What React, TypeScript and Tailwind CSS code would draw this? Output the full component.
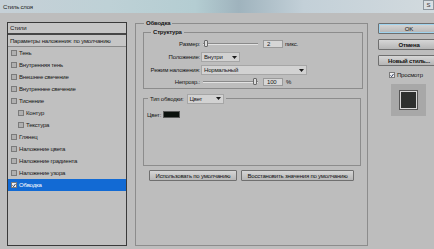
import React from "react";

type StyleItem = {
  label: string;
  indent?: boolean;
  checked?: boolean;
  active?: boolean;
};

const styleItems: StyleItem[] = [
  { label: "Тень" },
  { label: "Внутренняя тень" },
  { label: "Внешнее свечение" },
  { label: "Внутреннее свечение" },
  { label: "Тиснение" },
  { label: "Контур", indent: true },
  { label: "Текстура", indent: true },
  { label: "Глянец" },
  { label: "Наложение цвета" },
  { label: "Наложение градиента" },
  { label: "Наложение узора" },
  { label: "Обводка", checked: true, active: true },
];

const font = "font-['Liberation_Sans',Arial,sans-serif]";

function CheckBox({ checked, light }: { checked?: boolean; light?: boolean }) {
  return (
    <span
      className={`w-[6px] h-[6px] shrink-0 border border-[#7a7a7a] flex items-center justify-center ${
        light || checked ? "bg-[#f0f0f0]" : "bg-[#b0b0b0]"
      }`}
    >
      {checked && (
        <svg width="5" height="5" viewBox="0 0 5 5">
          <path d="M0.6 2.4 L2 3.9 L4.4 0.6" stroke="#1b2a55" strokeWidth="1.1" fill="none" />
        </svg>
      )}
    </span>
  );
}

function Dropdown({ value, width }: { value: string; width: string }) {
  return (
    <div
      className={`${width} h-[10px] bg-[#d2d2d2] border border-[#a6a6a6] flex items-center justify-between pl-[2px] pr-[2px]`}
    >
      <span className="leading-none">{value}</span>
      <svg width="5" height="3" viewBox="0 0 5 3">
        <path d="M0 0 H5 L2.5 3 Z" fill="#1a1a1a" />
      </svg>
    </div>
  );
}

function Slider({ end }: { end?: boolean }) {
  return (
    <div className="relative w-[55px] h-[9px]">
      <div className="absolute inset-x-0 top-[4px] h-[2px] border-t border-[#8a8a8a] border-b border-b-[#e2e2e2]" />
      <div
        className={`absolute top-[1px] w-[4px] h-[7px] rounded-[1px] bg-[#dcdcdc] border border-[#6a6a6a] ${
          end ? "right-[1px]" : "left-[1px]"
        }`}
      />
    </div>
  );
}

function NumBox({ value }: { value: string }) {
  return (
    <div className="w-[20px] h-[8px] bg-[#d6d6d6] border border-[#9a9a9a] flex items-center pl-[3px] leading-none">
      {value}
    </div>
  );
}

function Btn({ children, className }: { children: React.ReactNode; className: string }) {
  return (
    <div
      className={`h-[11px] flex items-center justify-center bg-[linear-gradient(#d6d6d6,#b6b6b6)] border border-[#6f6f6f] rounded-[1px] leading-none text-[#111] ${className}`}
    >
      {children}
    </div>
  );
}

export default function App() {
  return (
    <div
      className={`w-[434px] h-[249px] overflow-hidden flex flex-col bg-[#bdbdbd] text-[6px] tracking-[-0.2px] whitespace-nowrap text-[#161616] ${font}`}
    >
      {/* title bar */}
      <div className="h-[13px] shrink-0 flex items-center justify-between pl-[3px] bg-[linear-gradient(90deg,#c6d0d7_0%,#bed1d6_25%,#b4cdd2_45%,#9fb3bd_55%,#c3d0d8_70%,#d2dade_100%)]">
        <span className="leading-none text-[#202020]">Стиль слоя</span>
        <div className="self-start w-[11px] h-[10px] bg-[#d9dfe3] border border-[#8d979e] flex items-center justify-center text-[#333]">
          S
        </div>
      </div>

      <div className="flex items-start flex-1">
        {/* left list */}
        <div className="ml-[7px] mt-[9px] w-[120px] h-[224px] shrink-0 border border-[#3a3a3a] bg-[#c0c0c0] flex flex-col">
          <div className="h-[10px] flex items-center pl-[2px] bg-[#c6c6c6] leading-none">Стили</div>
          <div className="h-[2px] bg-[#474747]" />
          <div className="h-[11px] flex items-center pl-[2px] bg-[#c6c6c6] leading-none">
            Параметры наложения: по умолчанию
          </div>
          <div className="h-[1px] bg-[#8a8a8a]" />
          {styleItems.map((item) => (
            <div
              key={item.label}
              className={`h-[12px] flex items-center gap-[2px] leading-none ${
                item.indent ? "pl-[10px]" : "pl-[3px]"
              } ${item.active ? "bg-[#126ad4] text-white" : ""}`}
            >
              <CheckBox checked={item.checked} />
              <span>{item.label}</span>
            </div>
          ))}
        </div>

        {/* middle group */}
        <div className="ml-[8px] mt-[10px] w-[233px] h-[223px] shrink-0 border border-[#8c8c8c] flex flex-col">
          <span className="-mt-[5px] ml-[8px] self-start px-[2px] h-[9px] leading-[9px] bg-[#bdbdbd] font-bold">
            Обводка
          </span>

          {/* Структура */}
          <div className="mt-[4px] ml-[7px] w-[220px] h-[57px] border border-[#8c8c8c] flex flex-col">
            <span className="-mt-[5px] ml-[7px] self-start px-[2px] h-[9px] leading-[9px] bg-[#bdbdbd] font-bold">
              Структура
            </span>
            <div className="mt-[2px] h-[9px] flex items-center">
              <span className="w-[56px] text-right leading-none">Размер:</span>
              <div className="ml-[3px]">
                <Slider />
              </div>
              <div className="ml-[5px]">
                <NumBox value="2" />
              </div>
              <span className="ml-[2px] leading-none">пикс.</span>
            </div>
            <div className="mt-[4px] h-[10px] flex items-center">
              <span className="w-[56px] text-right leading-none">Положение:</span>
              <div className="ml-[1px]">
                <Dropdown value="Внутри" width="w-[39px]" />
              </div>
            </div>
            <div className="mt-[3px] h-[10px] flex items-center">
              <span className="w-[56px] text-right leading-none">Режим наложения:</span>
              <div className="ml-[1px]">
                <Dropdown value="Нормальный" width="w-[106px]" />
              </div>
            </div>
            <div className="mt-[2px] h-[9px] flex items-center">
              <span className="w-[56px] text-right leading-none">Непрозр.:</span>
              <div className="ml-[3px]">
                <Slider end />
              </div>
              <div className="ml-[5px]">
                <NumBox value="100" />
              </div>
              <span className="ml-[3px] leading-none">%</span>
            </div>
          </div>

          {/* Тип обводки */}
          <div className="mt-[9px] ml-[7px] w-[218px] h-[68px] border border-[#8c8c8c] flex flex-col">
            <div className="-mt-[6px] ml-[4px] self-start h-[11px] flex items-center bg-[#bdbdbd] px-[2px]">
              <span className="leading-none">Тип обводки:</span>
              <div className="ml-[3px]">
                <Dropdown value="Цвет" width="w-[37px]" />
              </div>
            </div>
            <div className="mt-[7px] ml-[3px] h-[7px] flex items-center gap-[2px]">
              <span className="leading-none">Цвет:</span>
              <div className="w-[17px] h-[7px] bg-[#0c120e] border border-[#5a5a5a]" />
            </div>
          </div>

          <div className="mt-[4px] ml-[13px] flex gap-[4px]">
            <Btn className="w-[88px]">Использовать по умолчанию</Btn>
            <Btn className="w-[113px]">Восстановить значения по умолчанию</Btn>
          </div>
        </div>

        {/* right column */}
        <div className="ml-[10px] mt-[10px] w-[62px] shrink-0 flex flex-col">
          <Btn className="w-[62px] h-[10px] border-[#3d9fd0] shadow-[inset_0_0_0_1px_#9fd3ee]">OK</Btn>
          <Btn className="mt-[5px] w-[62px] h-[10px] font-bold">Отмена</Btn>
          <Btn className="mt-[5px] w-[62px] h-[10px] font-bold">Новый стиль...</Btn>
          <div className="mt-[5px] ml-[11px] h-[8px] flex items-center gap-[2px]">
            <CheckBox checked light />
            <span className="leading-none">Просмотр</span>
          </div>
          <div className="mt-[5px] ml-[13px] w-[35px] h-[32px] bg-[#a8a8a8] flex items-center justify-center">
            <div className="w-[17px] h-[18px] bg-[#2e302f] border border-[#d8d8d8] outline outline-1 outline-[#555]" />
          </div>
        </div>
      </div>
    </div>
  );
}
